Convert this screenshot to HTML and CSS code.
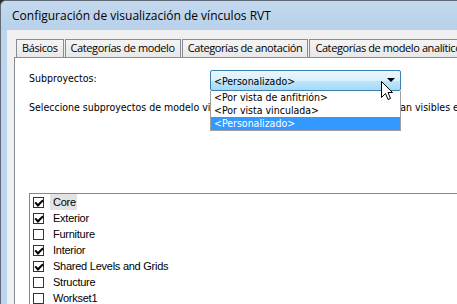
FILE: index.html
```html
<!DOCTYPE html>
<html lang="es">
<head>
<meta charset="utf-8">
<title>Configuración de visualización de vínculos RVT</title>
<link rel="stylesheet" href="styles.css">
</head>
<body>
<div class="window">
  <div class="titlebar">Configuración de visualización de vínculos RVT</div>
  <div class="client">
    <div class="tabs">
      <div class="tab">Básicos</div>
      <div class="tab">Categorías de modelo</div>
      <div class="tab">Categorías de anotación</div>
      <div class="tab">Categorías de modelo analítico</div>
    </div>
    <div class="page">
      <div class="row">
        <div class="label">Subproyectos:</div>
        <div class="combo-wrap">
          <div class="combo">
            <span class="combo-text">&lt;Personalizado&gt;</span>
            <span class="combo-arrow"></span>
          </div>
          <ul class="droplist">
            <li class="opt">&lt;Por vista de anfitrión&gt;</li>
            <li class="opt">&lt;Por vista vinculada&gt;</li>
            <li class="opt selected">&lt;Personalizado&gt;</li>
          </ul>
          <svg class="cursor" width="13" height="20" viewBox="0 0 13 20">
            <path d="M0.5 0.5 V16.5 L4.5 12.5 L7 18.5 L9.5 17.5 L7 11.5 H11.5 Z" fill="#fff" stroke="#000" stroke-width="1" stroke-linejoin="miter"/>
          </svg>
        </div>
      </div>
      <div class="desc">Seleccione subproyectos de modelo vinculado para los que esos elementos sean visibles en la vista actual.</div>
      <ul class="listbox">
        <li class="item"><span class="check on"></span><span class="name focus">Core</span></li>
        <li class="item"><span class="check on"></span><span class="name">Exterior</span></li>
        <li class="item"><span class="check"></span><span class="name">Furniture</span></li>
        <li class="item"><span class="check on"></span><span class="name">Interior</span></li>
        <li class="item"><span class="check on"></span><span class="name">Shared Levels and Grids</span></li>
        <li class="item"><span class="check"></span><span class="name">Structure</span></li>
        <li class="item"><span class="check"></span><span class="name">Workset1</span></li>
      </ul>
    </div>
  </div>
</div>
</body>
</html>
```

FILE: styles.css
```css
html, body {
  margin: 0;
  padding: 0;
  width: 457px;
  height: 304px;
  overflow: hidden;
  background: #2b2b2b;
}

.window {
  width: 457px;
  height: 304px;
  box-sizing: border-box;
  border-top: 1px solid #5f6a76;
  border-left: 1px solid #5f6a76;
  border-top-left-radius: 6px;
  background: #bcd4ec;
  display: flex;
  flex-direction: column;
  overflow: hidden;
}

.titlebar {
  height: 29px;
  flex: none;
  background: linear-gradient(#c4d9ef, #b8d0ea);
  font-family: "Open Sans", "Noto Sans", sans-serif;
  font-size: 12px;
  color: #000;
  line-height: 29px;
  padding-left: 11px;
  white-space: nowrap;
}

.client {
  flex: 1;
  margin-left: 6px;
  background: #f0f0f0;
  padding: 9px 0 0 7px;
  display: flex;
  flex-direction: column;
  min-height: 0;
}

.tabs {
  display: flex;
  padding-left: 2px;
  height: 18px;
  flex: none;
  white-space: nowrap;
}

.tab {
  box-sizing: border-box;
  height: 18px;
  border: 1px solid #898c95;
  border-bottom: none;
  background: linear-gradient(#f4f4f4, #e8e8e8);
  font-family: "Open Sans", "Noto Sans", sans-serif;
  font-size: 11px;
  letter-spacing: -0.4px;
  line-height: 16px;
  padding: 0 5px;
  margin-right: 1px;
  color: #000;
}

.page {
  flex: 1;
  background: #fff;
  border-top: 1px solid #898c95;
  border-left: 1px solid #898c95;
  padding: 12px 0 0 14px;
  font-family: "DejaVu Sans Condensed", "DejaVu Sans", sans-serif;
  font-size: 10.5px;
  color: #000;
  min-height: 0;
  overflow: hidden;
}

.row {
  display: flex;
  align-items: flex-start;
  height: 21px;
}

.label {
  width: 181px;
  flex: none;
  line-height: 16px;
}

.combo-wrap {
  position: relative;
  width: 191px;
  flex: none;
}

.combo {
  box-sizing: border-box;
  height: 21px;
  border: 1px solid #3c7fb1;
  border-radius: 2px;
  background: linear-gradient(#eaf6fd 0%, #d9f0fc 50%, #bee6fd 50%, #a7d9f5 100%);
  display: flex;
  align-items: center;
  padding-left: 3px;
  line-height: 14px;
}

.combo-text {
  flex: 1;
}

.combo-arrow {
  width: 0;
  height: 0;
  border-left: 4px solid transparent;
  border-right: 4px solid transparent;
  border-top: 4px solid #000;
  margin-right: 5px;
  margin-top: -1px;
}

.droplist {
  position: absolute;
  left: 0;
  top: 21px;
  width: 191px;
  box-sizing: border-box;
  margin: 0;
  padding: 0;
  list-style: none;
  background: #fff;
  border: 1px solid #a0a0a0;
  border-top: none;
}

.opt {
  height: 13px;
  line-height: 13px;
  padding-left: 3px;
  white-space: nowrap;
}

.opt.selected {
  background: #3399ff;
  color: #fff;
}

.cursor {
  position: absolute;
  left: 171px;
  top: 11px;
}

.desc {
  margin-top: 9px;
  line-height: 14px;
  white-space: nowrap;
}

.listbox {
  margin: 79px 0 0 0;
  padding: 0 0 0 3px;
  list-style: none;
  border-top: 1px solid #828790;
  border-left: 1px solid #828790;
  font-family: "Liberation Sans", Arial, sans-serif;
  font-size: 11px;
  letter-spacing: -0.25px;
}

.item {
  height: 16px;
  display: flex;
  align-items: center;
}

.check {
  width: 11px;
  height: 11px;
  box-sizing: border-box;
  border: 1px solid #333;
  background: #fff;
  margin-right: 6px;
  position: relative;
  flex: none;
}

.check.on::after {
  content: "";
  position: absolute;
  left: 1px;
  top: 0px;
  width: 6px;
  height: 3px;
  border-left: 2px solid #000;
  border-bottom: 2px solid #000;
  transform: rotate(-45deg) translate(-1px, 2px);
  transform-origin: 3px 3px;
}

.name {
  height: 16px;
  line-height: 16px;
  padding: 0 1px 0 3px;
}

.name.focus {
  background: #e3e3e3;
}
```
